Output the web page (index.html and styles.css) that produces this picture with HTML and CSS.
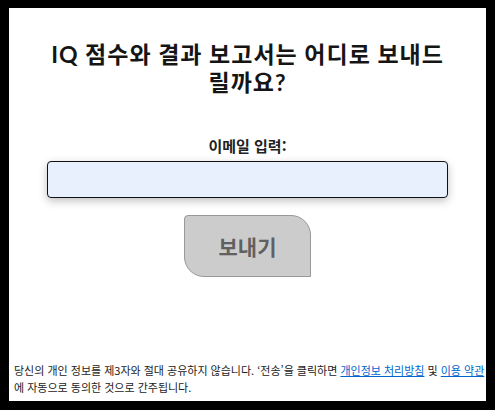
FILE: index.html
```html
<!DOCTYPE html>
<html lang="ko">
<head>
<meta charset="utf-8">
<link rel="stylesheet" href="styles.css">
</head>
<body>
<div class="page">
  <main class="main">
    <h1 class="title">IQ 점수와 결과 보고서는 어디로 보내드릴까요?</h1>
    <form class="form">
      <label class="label" for="email">이메일 입력:</label>
      <input class="input" id="email" type="email">
      <button class="send" type="button">보내기</button>
    </form>
  </main>
  <p class="notice">당신의 개인 정보를 제3자와 절대 공유하지 않습니다. ‘전송’을 클릭하면 <a href="#">개인정보 처리방침</a> 및 <a href="#">이용 약관</a><br>에 자동으로 동의한 것으로 간주됩니다.</p>
</div>
</body>
</html>
```

FILE: styles.css
```css
html, body {
  margin: 0;
  padding: 0;
  background: #000;
}
body {
  padding: 8px 9px 9px 9px;
}
.page {
  background: #fff;
  height: 393px;
  overflow: hidden;
  display: flex;
  flex-direction: column;
  font-family: "Noto Sans CJK KR", sans-serif;
}
.main {
  flex: 1;
  display: flex;
  flex-direction: column;
  align-items: center;
}
.title {
  margin: 32px 0 0 0;
  padding: 0 38px;
  font-family: Lato, "Noto Sans CJK KR", sans-serif;
  font-size: 23px;
  letter-spacing: 1px;
  line-height: 28px;
  font-weight: 700;
  color: #151515;
  text-align: center;
}
.form {
  display: flex;
  flex-direction: column;
  align-items: center;
  margin-top: 40px;
  width: 100%;
}
.label {
  font-size: 15px;
  font-weight: 700;
  line-height: 20px;
  color: #222;
}
.input {
  box-sizing: border-box;
  margin-top: 5px;
  width: 401px;
  height: 37px;
  border: 1px solid #111;
  border-radius: 4px;
  background: #e8f0fe;
  box-shadow: 0 3px 8px rgba(0, 0, 0, 0.25);
  outline: none;
}
.send {
  box-sizing: border-box;
  margin-top: 17px;
  width: 127px;
  height: 62px;
  background: #cccccc;
  border: 1px solid #999;
  border-radius: 4px 20px 0 20px;
  font-family: "Noto Sans CJK KR", sans-serif;
  font-size: 21px;
  font-weight: 700;
  color: #606060;
  padding: 0;
}
.notice {
  margin: 0 0 5px 0;
  padding-left: 5px;
  white-space: nowrap;
  font-size: 11px;
  line-height: 17px;
  color: #222;
}
.notice a {
  color: #0066cc;
}
```
